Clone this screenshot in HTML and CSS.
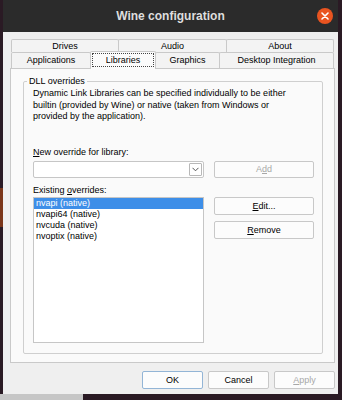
FILE: index.html
```html
<!DOCTYPE html>
<html lang="en">
<head>
	<meta charset="UTF-8">
	<title>Wine configuration</title>
	<link rel="stylesheet" href="styles.css">
</head>
<body>
	<div class="window">
		<div class="titlebar">
			<span class="title">Wine configuration</span>
			<span class="close">
				<svg width="8" height="8" viewBox="0 0 8 8"><path d="M1 1L7 7M7 1L1 7" stroke="#fff" stroke-width="1.6" stroke-linecap="round"/></svg>
			</span>
		</div>
		<div class="client">
			<div class="tab-row back">
				<div class="tab" style="width:108px">Drives</div>
				<div class="tab" style="width:109px">Audio</div>
				<div class="tab" style="width:108px">About</div>
			</div>
			<div class="tab-row front">
				<div class="tab" style="width:80px">Applications</div>
				<div class="tab active" style="width:66px"><span class="focus">Libraries</span></div>
				<div class="tab" style="width:65px">Graphics</div>
				<div class="tab" style="width:115px">Desktop Integration</div>
			</div>
			<div class="panel">
				<fieldset class="group">
					<legend>DLL overrides</legend>
					<p class="desc">Dynamic Link Libraries can be specified individually to be either<br>builtin (provided by Wine) or native (taken from Windows or<br>provided by the application).</p>
					<label class="field-label first"><u>N</u>ew override for library:</label>
					<div class="row">
						<div class="combo">
							<span class="arrow"><svg width="7" height="5" viewBox="0 0 7 5"><path d="M0.5 0.8L3.5 3.8L6.5 0.8" fill="none" stroke="#555" stroke-width="1"/></svg></span>
						</div>
						<button class="btn side-btn add" disabled>A<u>d</u>d</button>
					</div>
					<label class="field-label second">Existing <u>o</u>verrides:</label>
					<div class="row">
						<ul class="list">
							<li class="selected">nvapi (native)</li>
							<li>nvapi64 (native)</li>
							<li>nvcuda (native)</li>
							<li>nvoptix (native)</li>
						</ul>
						<div class="side">
							<button class="btn side-btn"><u>E</u>dit...</button>
							<button class="btn side-btn"><u>R</u>emove</button>
						</div>
					</div>
				</fieldset>
			</div>
			<div class="actions">
				<button class="btn dlg-btn default">OK</button>
				<button class="btn dlg-btn">Cancel</button>
				<button class="btn dlg-btn" disabled><u>A</u>pply</button>
			</div>
		</div>
	</div>
</body>
</html>
```

FILE: styles.css
```css
body{margin:0;width:342px;height:400px;overflow:hidden;font:9px "Liberation Sans",Arial,sans-serif;color:#000;
	background:linear-gradient(#7a3519,#7a3519) 0 188px/3px 39px no-repeat,linear-gradient(#c6c6c6,#c6c6c6) 0 394px/83px 6px no-repeat,#2a1a24;}
.window{margin-left:3px;width:335px;height:394px;display:flex;flex-direction:column;}

.titlebar{height:32px;background:#2b2b2b;display:grid;grid-template-columns:1fr auto 1fr;align-items:center;}
.title{grid-column:2;font:bold 12px "Liberation Sans",Arial,sans-serif;color:#dedede;}
.close{grid-column:3;justify-self:end;margin-right:5px;width:16px;height:16px;border-radius:50%;background:#e95420;display:flex;align-items:center;justify-content:center;}

.client{flex:1;background:#efefef;padding:7px 3px 5px 7px;display:flex;flex-direction:column;}

.tab-row{display:flex;margin:0 1px;}
.tab-row.back{height:13px;}
.tab-row.front{height:16px;}
.tab{box-sizing:border-box;border:1px solid #c9c9c9;border-bottom:0;margin-left:-1px;background:#f3f3f3;text-align:center;border-radius:2px 2px 0 0;white-space:nowrap;}
.tab:first-child{margin-left:0;}
.back .tab{line-height:12px;}
.front .tab{line-height:15px;}
.tab.active{background:#fbfbfb;height:18px;margin-top:-1px;margin-bottom:-1px;z-index:1;padding:1px 1px 0;}
.focus{display:block;border:1px dotted #444;line-height:12px;}

.panel{border:1px solid #c9c9c9;background:#fafafa;padding:7px 11px 8px 12px;}
.group{margin:0;border:1px solid #cfcfcf;border-radius:2px;padding:0 8px 10px 9px;}
.group legend{padding:0 2px;margin-left:-6px;line-height:11px;}
.desc{margin:1px 0 0;line-height:11.5px;white-space:nowrap;}
.field-label{display:block;line-height:11px;}
.field-label.first{margin:24px 0 3px;}
.field-label.second{margin:7px 0 1.5px;}

.row{display:flex;gap:10px;align-items:flex-start;}
.combo{box-sizing:border-box;width:171px;height:17px;border:1px solid #c6c6c6;border-radius:2px;background:#fff;display:flex;justify-content:flex-end;align-items:center;padding-right:1px;}
.arrow{box-sizing:border-box;width:13px;height:13px;border:1px solid #b8b8b8;border-radius:1px;display:flex;align-items:center;justify-content:center;}

.btn{box-sizing:border-box;border:1px solid #c8c8c8;border-radius:2px;background:#fcfcfc;font:inherit;color:#000;padding:0;line-height:14px;}
.btn:disabled{color:#a8a8a8;}
.side-btn{width:100px;height:18px;}
.side-btn.add{height:17px;}
.side{display:flex;flex-direction:column;gap:6px;}

.list{box-sizing:border-box;width:171px;height:146px;margin:0;padding:0;list-style:none;border:1px solid #c6c6c6;background:#fff;}
.list li{line-height:11px;padding-left:2px;}
.list li.selected{background:#3d8ee8;color:#fff;}

.actions{display:flex;justify-content:flex-end;gap:5px;margin-top:8px;}
.dlg-btn{width:61px;height:18px;}
.dlg-btn.default{border-color:#93b5d6;}
```
